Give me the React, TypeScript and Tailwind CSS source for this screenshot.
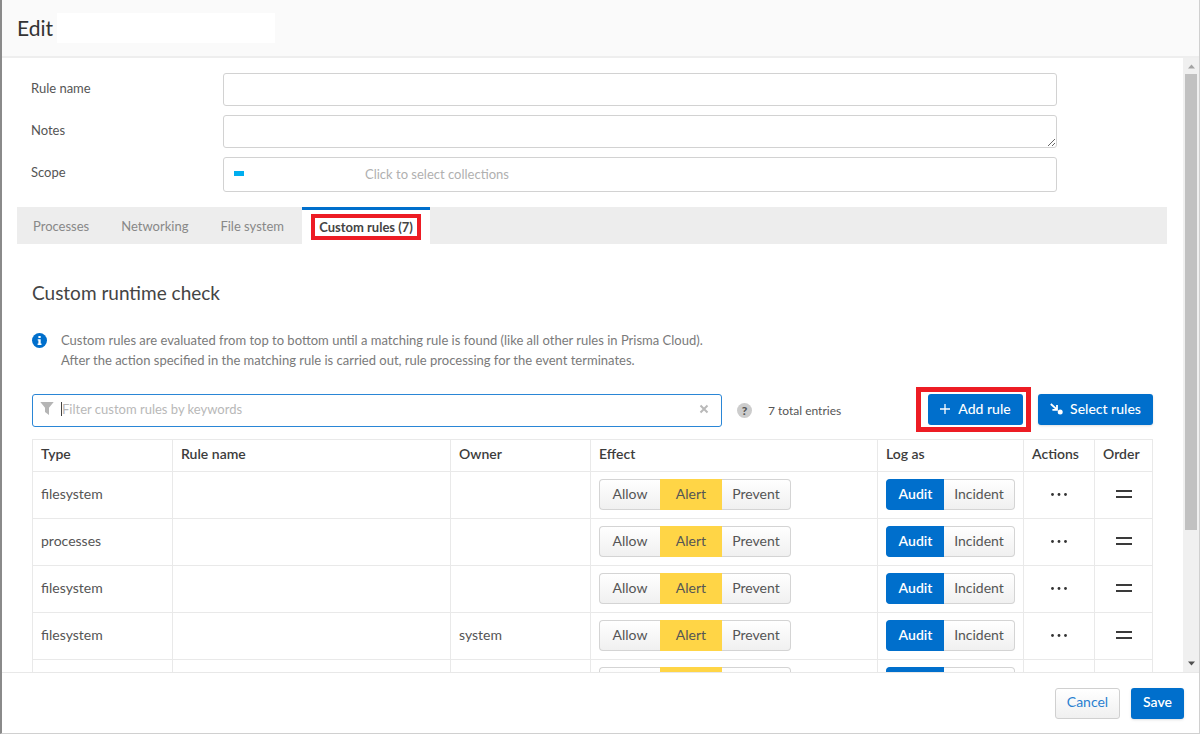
import { useState } from "react";
import { clsx } from "clsx";

type Rule = { id: number; type: string; owner: string };

const tabs = ["Processes", "Networking", "File system"];

const initialRules: Rule[] = [
  { id: 1, type: "filesystem", owner: "" },
  { id: 2, type: "processes", owner: "" },
  { id: 3, type: "filesystem", owner: "" },
  { id: 4, type: "filesystem", owner: "system" },
  { id: 5, type: "filesystem", owner: "" },
  { id: 6, type: "processes", owner: "" },
  { id: 7, type: "filesystem", owner: "" },
];

const plain = "bg-linear-to-b from-white to-[#f0f0f0] text-[#555]";
const primary = "bg-[#006fcc] text-white";
const headCell = "border border-[#e9e9e9] px-2 pb-1 text-left font-semibold";
const bodyCell = "border border-[#e9e9e9] px-2 pb-0.5";
const field = "block w-full rounded-[3px] border border-[#d2d2d2] bg-white outline-none";

function EffectToggle() {
  const [effect, setEffect] = useState("Alert");
  const options = [
    { name: "Allow", width: "w-[61px]" },
    { name: "Alert", width: "w-[62px]" },
    { name: "Prevent", width: "w-[69px]" },
  ];

  return (
    <div className="flex h-[31px]" role="group" aria-label="Effect">
      {options.map((o, i) => (
        <button
          key={o.name}
          onClick={() => setEffect(o.name)}
          aria-pressed={effect === o.name}
          className={clsx(
            o.width,
            "border-y",
            i === 0 && "rounded-l-[4px] border-l",
            i === 2 && "rounded-r-[4px] border-r",
            effect === o.name ? "border-[#ffd546] bg-[#ffd546] text-[#555]" : clsx("border-[#d4d4d4]", plain)
          )}
        >
          {o.name}
        </button>
      ))}
    </div>
  );
}

function LogToggle() {
  const [log, setLog] = useState("Audit");
  const options = [
    { name: "Audit", width: "w-[58px]" },
    { name: "Incident", width: "w-[71px]" },
  ];

  return (
    <div className="flex h-[31px]" role="group" aria-label="Log as">
      {options.map((o, i) => (
        <button
          key={o.name}
          onClick={() => setLog(o.name)}
          aria-pressed={log === o.name}
          className={clsx(
            o.width,
            "border-y",
            i === 0 ? "rounded-l-[4px] border-l" : "rounded-r-[4px] border-r",
            log === o.name ? clsx("border-[#006fcc] font-semibold", primary) : clsx("border-[#d4d4d4]", plain)
          )}
        >
          {o.name}
        </button>
      ))}
    </div>
  );
}

function RulesTable({ rules }: { rules: Rule[] }) {
  return (
    <table className="mt-3 w-full table-fixed border-collapse">
      <colgroup>
        <col className="w-[140px]" />
        <col />
        <col className="w-[140px]" />
        <col className="w-[287px]" />
        <col className="w-[146px]" />
        <col className="w-[71px]" />
        <col className="w-[58px]" />
      </colgroup>
      <thead>
        <tr className="h-8 text-[#3c3c3c]">
          <th className={headCell}>Type</th>
          <th className={headCell}>Rule name</th>
          <th className={headCell}>Owner</th>
          <th className={headCell}>Effect</th>
          <th className={headCell}>Log as</th>
          <th className={headCell}>Actions</th>
          <th className={headCell}>Order</th>
        </tr>
      </thead>
      <tbody>
        {rules.map((rule) => (
          <tr key={rule.id} className="h-[47px]">
            <td className={bodyCell}>{rule.type}</td>
            <td className={bodyCell}></td>
            <td className={bodyCell}>{rule.owner}</td>
            <td className={bodyCell}>
              <EffectToggle />
            </td>
            <td className={bodyCell}>
              <LogToggle />
            </td>
            <td className={bodyCell}>
              <button aria-label="Actions" className="mx-auto block">
                <svg width="18" height="6" viewBox="0 0 18 6" fill="#333">
                  <circle cx="2.5" cy="3.5" r="1.4" />
                  <circle cx="9" cy="3.5" r="1.4" />
                  <circle cx="15.5" cy="3.5" r="1.4" />
                </svg>
              </button>
            </td>
            <td className={bodyCell}>
              <button aria-label="Reorder" className="mx-auto block">
                <svg width="16" height="8" viewBox="0 0 16 8" fill="#3a3a3a">
                  <rect width="16" height="2" />
                  <rect y="6" width="16" height="2" />
                </svg>
              </button>
            </td>
          </tr>
        ))}
      </tbody>
    </table>
  );
}

function ScrollTrack() {
  return (
    <div className="flex w-4 shrink-0 flex-col items-center bg-[#f0f0f0]" aria-hidden="true">
      <svg width="15" height="16" viewBox="0 0 15 16">
        <path d="M4 10.5 7.5 6.5 11 10.5z" fill="#a3a3a3" />
      </svg>
      <div className="h-[456px] w-3 bg-[#c1c1c1]" />
      <svg className="mt-auto" width="15" height="16" viewBox="0 0 15 16">
        <path d="M4 5.5h7L7.5 9.5z" fill="#505050" />
      </svg>
    </div>
  );
}

export default function App() {
  const [activeTab, setActiveTab] = useState("Custom rules");
  const [filter, setFilter] = useState("");

  const rules = initialRules.filter((r) => (r.type + r.owner).includes(filter.toLowerCase()));

  return (
    <div className="flex h-screen flex-col border-r border-b border-l-2 border-[#d0d0d0] border-l-[#8a8a8a] bg-white font-[Lato,sans-serif] text-[14px] leading-5 text-[#555]">
      <header className="flex h-[58px] shrink-0 items-center gap-1 border-b-2 border-[#eee] bg-[#fafafa] pl-[15px]">
        <h1 className="text-[21px] text-[#333]">Edit</h1>
        <span className="h-[30px] w-[218px] bg-white" />
      </header>

      <div className="flex min-h-0 flex-1">
        <main className="min-w-0 flex-1 overflow-y-auto pr-4 pl-[15px] [scrollbar-width:none]">
          <form className="mt-[15px] grid grid-cols-[192px_1fr] gap-y-[9px] pr-[110px] pl-[14px] text-[13px]">
            <label htmlFor="name" className="pt-[5px]">Rule name</label>
            <input id="name" className={clsx(field, "h-[33px] px-2")} />
            <label htmlFor="notes" className="pt-[5px]">Notes</label>
            <textarea id="notes" className={clsx(field, "h-[33px] px-2")} />
            <label htmlFor="scope" className="pt-[5px]">Scope</label>
            <button
              id="scope"
              type="button"
              className={clsx(field, "flex h-[35px] items-center pb-0.5 pl-[10px] text-[#b0b0b0]")}
            >
              <span className="mr-[121px] h-[5px] w-[10px] bg-[#00aeef]" />
              Click to select collections
            </button>
          </form>

          <nav className="mt-[15px] flex h-[37px] bg-[#ededed] text-[13px] text-[#888]">
            {tabs.map((tab) => (
              <button key={tab} onClick={() => setActiveTab(tab)} className="px-4">
                {tab}
              </button>
            ))}
            <button
              onClick={() => setActiveTab("Custom rules")}
              aria-current={activeTab === "Custom rules"}
              className="ml-0.5 w-32 border-t-3 border-[#006fcc] bg-white font-bold text-[#444]"
            >
              <span className="inline-block border-4 border-[#ed1c24] px-1 leading-[18px]">Custom rules (7)</span>
            </button>
          </nav>

          <section className="pt-[37px] pr-[14px] pl-[15px]">
            <h2 className="text-[19px] leading-6 text-[#444]">Custom runtime check</h2>

            <div className="mt-[25px] flex gap-[14px] text-[13px] text-[#7a7a7a]">
              <svg className="mt-[3px] shrink-0" width="15" height="15" viewBox="0 0 15 15">
                <circle cx="7.5" cy="7.5" r="7.5" fill="#006fcc" />
                <path d="M6.4 3h2.3v2H6.4zM5.7 6.2h3v4.2h.8v1.5H5.6v-1.5h.8V7.6h-.7z" fill="#fff" />
              </svg>
              <p>
                Custom rules are evaluated from top to bottom until a matching rule is found (like all other rules in Prisma Cloud).
                <br />
                After the action specified in the matching rule is carried out, rule processing for the event terminates.
              </p>
            </div>

            <div className="mt-6 flex items-center">
              <div className="flex h-[33px] w-[690px] items-center rounded-[3px] border border-[#2a86d6] pr-3 pb-1 pl-[7px]">
                <svg width="14" height="13" viewBox="0 0 14 13" fill="#b5b5b5">
                  <path d="M.3 0h13.4L9 5.8V13L5 10V5.8z" />
                </svg>
                <span className="ml-[7px] h-[14px] w-px bg-[#444]" />
                <input
                  aria-label="Filter custom rules"
                  value={filter}
                  onChange={(e) => setFilter(e.target.value)}
                  placeholder="Filter custom rules by keywords"
                  className="min-w-0 flex-1 text-[13px] outline-none placeholder:text-[#b8b8b8]"
                />
                <button aria-label="Clear filter" onClick={() => setFilter("")}>
                  <svg width="10" height="10" viewBox="0 0 10 10" stroke="#b9b9b9" strokeWidth="2">
                    <path d="M1.5 1.5l7 7M8.5 1.5l-7 7" />
                  </svg>
                </button>
              </div>
              <button
                aria-label="Help"
                className="ml-[15px] size-[15px] rounded-full bg-[#ccc] text-[12px] leading-[15px] font-black text-[#555]"
              >
                ?
              </button>
              <span className="ml-4 text-[12px]">7 total entries</span>

              <div className="ml-auto flex gap-[15px] pb-0.5 font-medium">
                <div className="relative">
                  <button className={clsx("flex h-[31px] w-[95px] items-center justify-center gap-2 rounded-[3px] pb-0.5", primary)}>
                    <svg width="10" height="10" viewBox="0 0 10 10" stroke="#fff" strokeWidth="1.3">
                      <path d="M5 0v10M0 5h10" />
                    </svg>
                    Add rule
                  </button>
                  <span className="pointer-events-none absolute -top-[7px] -right-2 -bottom-[7px] -left-3 border-5 border-[#ed1c24]" />
                </div>
                <button className={clsx("flex h-[31px] w-[115px] items-center justify-center gap-[7px] rounded-[3px] pb-0.5 shadow-sm", primary)}>
                  <svg width="13" height="12" viewBox="0 0 13 12">
                    <path d="M.8 1 6.5 6.2M7 2v4.8H2.4" fill="none" stroke="#fff" strokeWidth="1.8" />
                    <circle cx="10.2" cy="9" r="2.5" fill="#fff" />
                  </svg>
                  Select rules
                </button>
              </div>
            </div>

            <RulesTable rules={rules} />
          </section>
        </main>
        <ScrollTrack />
      </div>

      <footer className="flex h-[61px] shrink-0 items-center justify-end gap-[11px] border-t border-[#e8e8e8] pr-[15px]">
        <button className="h-[31px] w-[65px] rounded-[3px] border border-[#d0d0d0] bg-linear-to-b from-white to-[#f0f0f0] pb-0.5 text-[#2a7fd0]">
          Cancel
        </button>
        <button className={clsx("h-[31px] w-[53px] rounded-[3px] pb-0.5 font-semibold shadow-sm", primary)}>Save</button>
      </footer>
    </div>
  );
}
